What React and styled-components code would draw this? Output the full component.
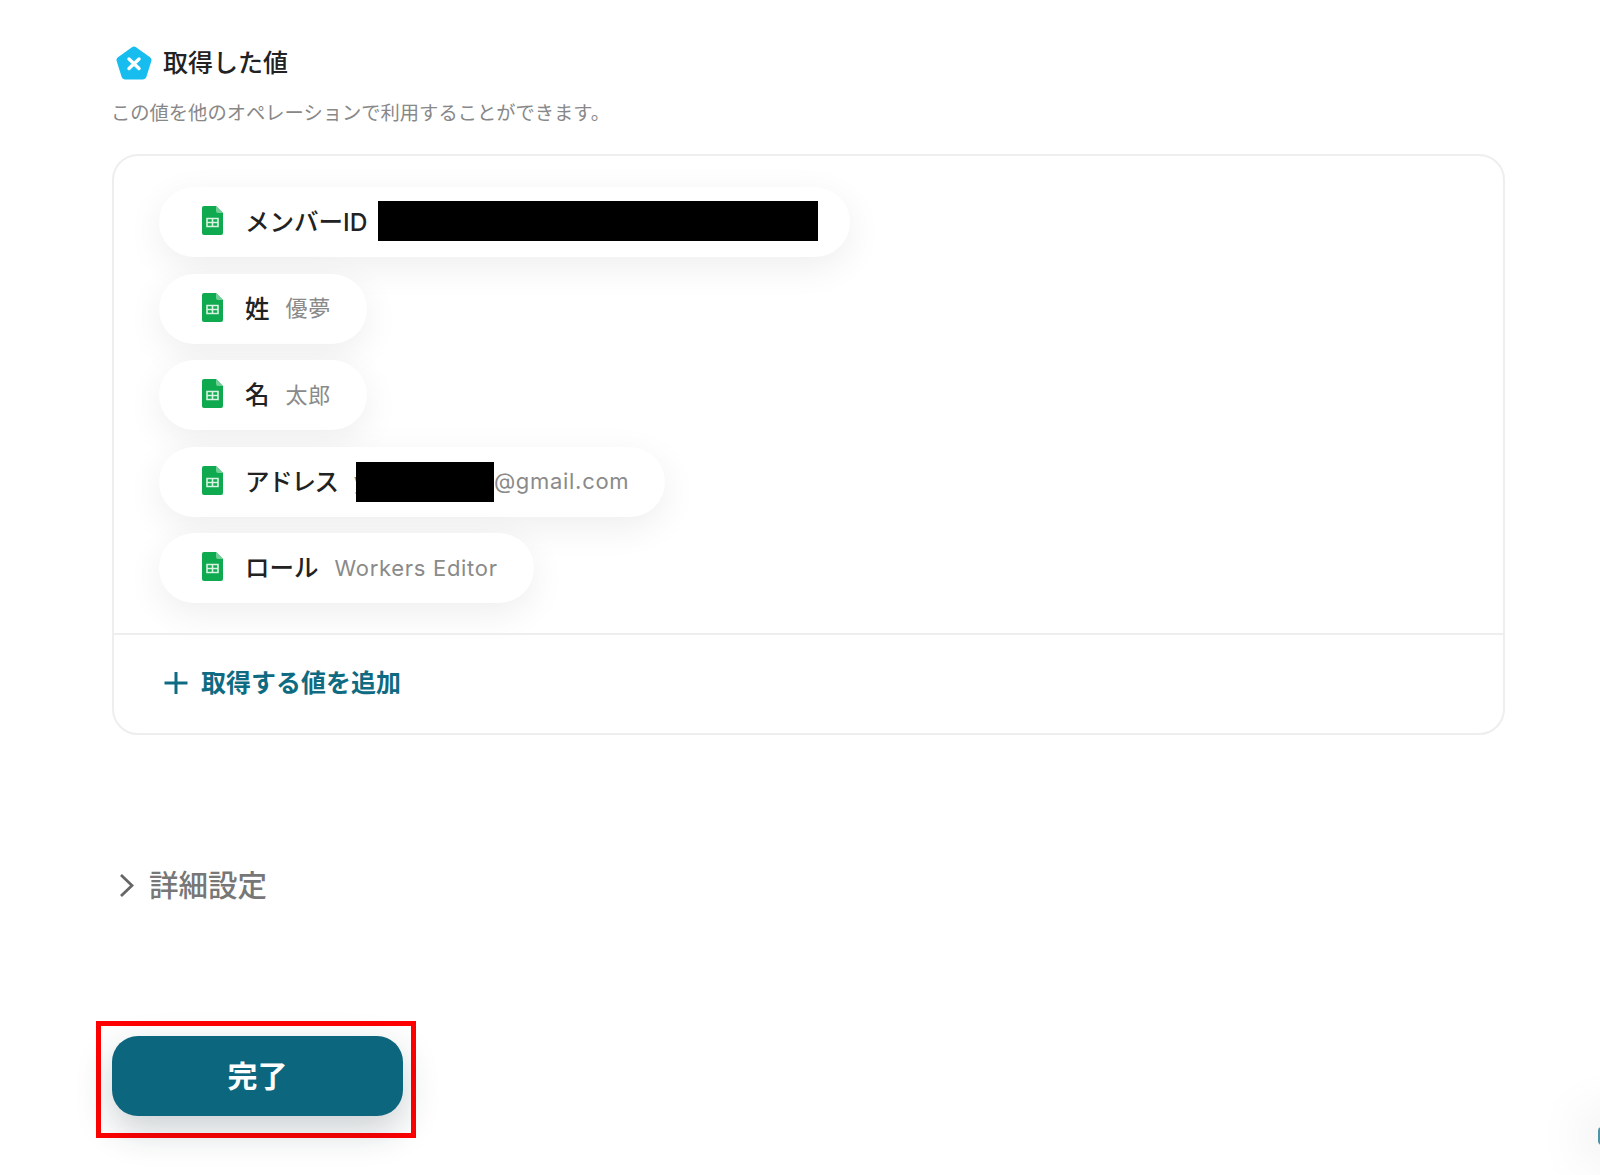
import React from "react";
import styled, { createGlobalStyle } from "styled-components";

const Global = createGlobalStyle`
  html, body { margin: 0; padding: 0; background: #fff; }
  body { font-family: Inter, "Noto Sans CJK JP", "Noto Sans", sans-serif; overflow: hidden; }
`;

const Page = styled.div`
  position: relative;
  width: 1600px;
  height: 1175px;
  box-sizing: border-box;
  padding: 46px 95px 0 96px;
  overflow: hidden;
`;
const Section = styled.section`
  padding-left: 16px;
`;
const TitleRow = styled.div`
  display: flex;
  align-items: center;
  gap: 11px;
  height: 34px;
  padding-left: 4px;
`;
const Title = styled.h2`
  margin: 0;
  font-size: 25px;
  line-height: 34px;
  font-weight: 500;
  color: #222;
`;
const Subtitle = styled.p`
  margin: 19px 0 0 -1px;
  font-size: 19.3px;
  line-height: 28px;
  color: #888;
`;
const Card = styled.div`
  margin-top: 27px;
  height: 581px;
  box-sizing: border-box;
  border: 2px solid #eeeeee;
  border-radius: 26px;
  display: flex;
  flex-direction: column;
`;
const PillList = styled.div`
  flex: 0 0 477px;
  box-sizing: border-box;
  padding: 31px 0 0 45px;
  display: flex;
  flex-direction: column;
  align-items: flex-start;
  gap: 16.5px;
`;
const Pill = styled.div`
  height: 70px;
  box-sizing: border-box;
  display: flex;
  align-items: center;
  padding: 0 ${(p) => p.$right || 36}px 3px 43px;
  border-radius: 35px;
  background: #fff;
  box-shadow: 0 10px 36px rgba(0, 0, 0, 0.07);
`;
const Label = styled.span`
  margin: 0 ${(p) => p.$after || 16}px 0 22px;
  font-size: 24.5px;
  font-weight: 500;
  letter-spacing: ${(p) => p.$tracking || 0}px;
  color: #222;
  white-space: nowrap;
`;
const Value = styled.span`
  display: flex;
  align-items: center;
  font-size: 22px;
  letter-spacing: 0.7px;
  color: #8a8a8a;
  white-space: nowrap;
  margin-top: ${(p) => (p.$latin ? 2 : 0)}px;
  padding-bottom: ${(p) => (p.$latin ? 0 : 2)}px;
`;
const Redaction = styled.span`
  display: block;
  width: ${(p) => p.$w}px;
  height: 40px;
  background: #000;
  margin-left: ${(p) => p.$ml || 0}px;
  position: relative;
  top: ${(p) => p.$top || 0}px;
`;
const AddRow = styled.div`
  flex: 1;
  border-top: 2px solid #eeeeee;
  display: flex;
  align-items: center;
  gap: 13px;
  padding: 0 0 2px 50px;
  font-size: 25px;
  font-weight: 700;
  color: #0f6b82;
`;
const AddLabel = styled.span`
  padding-bottom: 4px;
`;
const Details = styled.div`
  margin: 128px 0 0 7px;
  display: flex;
  align-items: center;
  gap: 15px;
  height: 40px;
  font-size: 29.5px;
  font-weight: 500;
  color: #777;
`;
const ChevronWrap = styled.span`
  display: flex;
  margin-top: 4px;
`;
const Highlight = styled.div`
  display: inline-flex;
  margin-top: 118px;
  padding: 10px 8px 17px 11px;
  border: 5px solid #ff0000;
`;
const DoneButton = styled.button`
  width: 291px;
  height: 80px;
  border: 0;
  padding: 0 0 5px;
  border-radius: 26px;
  background: #0b667e;
  color: #fff;
  font-family: inherit;
  font-size: 30px;
  font-weight: 700;
  box-shadow: 0 14px 36px rgba(20, 40, 50, 0.22);
`;
const Widget = styled.div`
  position: absolute;
  left: 1598px;
  top: 1127px;
  width: 60px;
  height: 18px;
  border-radius: 4px;
  background: #4f93a6;
  box-shadow: 0 0 50px 20px rgba(0, 0, 0, 0.05);
`;

const Pentagon = () => (
  <svg width="36" height="34" viewBox="0 0 36 34" aria-hidden="true">
    <path
      d="M18 4 L32 14 L27 30 H9 L4 14 Z"
      fill="#16bdee"
      stroke="#16bdee"
      strokeWidth="7"
      strokeLinejoin="round"
    />
    <path d="M13 13 L23 22.5 M23 13 L13 22.5" stroke="#fff" strokeWidth="3.4" strokeLinecap="round" />
  </svg>
);

const Sheet = () => (
  <svg width="21" height="29" viewBox="0 0 21 29" aria-hidden="true">
    <path
      d="M2 0 H14 L21 7 V27 a2 2 0 0 1 -2 2 H2 a2 2 0 0 1 -2 -2 V2 a2 2 0 0 1 2 -2 Z"
      fill="#0fa94f"
    />
    <path d="M14 0 L21 7 H16 a2 2 0 0 1 -2 -2 Z" fill="#6fcf95" />
    <path
      d="M5 12.5 H16 V20.5 H5 Z M10.5 12.5 V20.5 M5 16.5 H16"
      fill="none"
      stroke="#d8f3e2"
      strokeWidth="1.6"
    />
  </svg>
);

const Plus = () => (
  <svg width="24" height="24" viewBox="0 0 24 24" aria-hidden="true">
    <path d="M12 1 V23 M0.5 12 H23.5" stroke="#0f6b82" strokeWidth="3" />
  </svg>
);

const Chevron = () => (
  <svg width="15" height="25" viewBox="0 0 15 25" aria-hidden="true">
    <path d="M2 2 L13 12.5 L2 23" fill="none" stroke="#666" strokeWidth="2.8" />
  </svg>
);

export default function App() {
  return (
    <>
      <Global />
      <Page>
        <Section>
          <TitleRow>
            <Pentagon />
            <Title>取得した値</Title>
          </TitleRow>
          <Subtitle>この値を他のオペレーションで利用することができます。</Subtitle>
          <Card>
            <PillList>
              <Pill $right={32}>
                <Sheet />
                <Label $after={11}>メンバーID</Label>
                <Redaction $w={440} />
              </Pill>
              <Pill>
                <Sheet />
                <Label>姓</Label>
                <Value>優夢</Value>
              </Pill>
              <Pill>
                <Sheet />
                <Label>名</Label>
                <Value>太郎</Value>
              </Pill>
              <Pill>
                <Sheet />
                <Label $tracking={-1.3}>アドレス</Label>
                <Value $latin>
                  y
                  <Redaction $w={138} $ml={-11} $top={1} />
                  @gmail.com
                </Value>
              </Pill>
              <Pill>
                <Sheet />
                <Label>ロール</Label>
                <Value $latin>Workers Editor</Value>
              </Pill>
            </PillList>
            <AddRow>
              <Plus />
              <AddLabel>取得する値を追加</AddLabel>
            </AddRow>
          </Card>
          <Details>
            <ChevronWrap>
              <Chevron />
            </ChevronWrap>
            詳細設定
          </Details>
        </Section>
        <Highlight>
          <DoneButton>完了</DoneButton>
        </Highlight>
        <Widget />
      </Page>
    </>
  );
}
